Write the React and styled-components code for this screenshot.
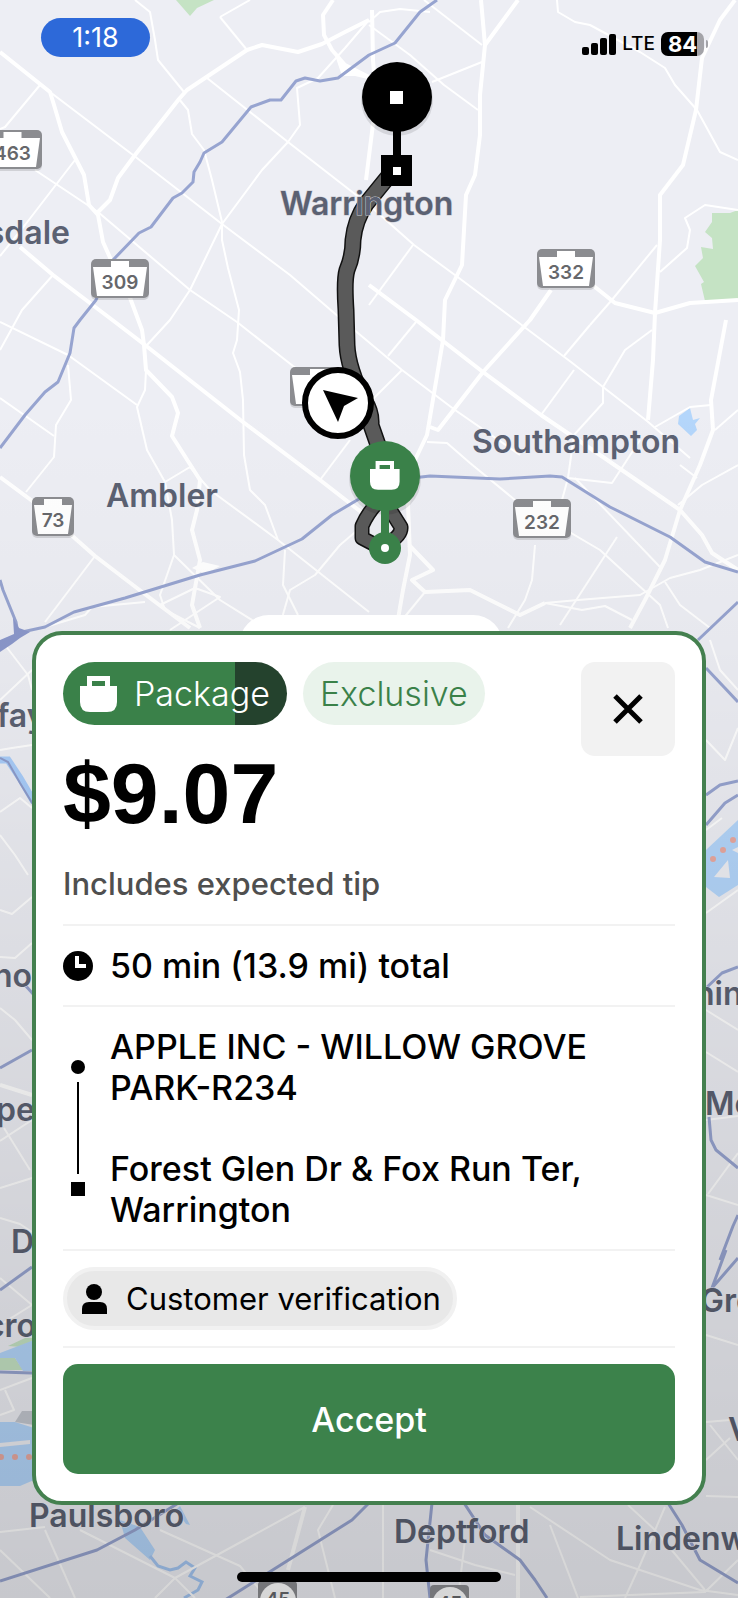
import styled, { createGlobalStyle } from "styled-components";

const GlobalStyle = createGlobalStyle`
  * {
    box-sizing: border-box;
  }

  body {
    margin: 0;
    font-family: Inter, "Liberation Sans", sans-serif;
    color: #000;
  }
`;

const Screen = styled.main`
  position: relative;
  min-height: 100vh;
  display: flex;
  flex-direction: column;
  justify-content: space-between;
  background: #edeef4;
  overflow: hidden;
`;

const MapLayer = styled.div`
  position: absolute;
  inset: 0;

  svg {
    display: block;
    width: 100%;
    height: 100%;
  }
`;

const StatusBar = styled.header`
  position: relative;
  display: flex;
  align-items: center;
  justify-content: space-between;
  padding: 18px 34px 0 41px;
`;

const Clock = styled.time`
  width: 109px;
  height: 39px;
  border-radius: 20px;
  background: #2d69d9;
  color: #fff;
  font-size: 27px;
  line-height: 39px;
  text-align: center;
`;

const StatusIcons = styled.div`
  display: flex;
  align-items: center;
  gap: 6px;
  padding-top: 13px;
  font-size: 19px;
  line-height: 24px;
  font-weight: 500;
`;

const Battery = styled.span`
  position: relative;
  width: 43px;
  height: 24px;
  border-radius: 7px;
  background: linear-gradient(90deg, #000 84%, #a3a3a8 84%);
  color: #fff;
  font-size: 22px;
  font-weight: 700;
  text-align: center;

  &::after {
    content: "";
    position: absolute;
    top: 8px;
    right: -4px;
    width: 2px;
    height: 8px;
    border-radius: 0 2px 2px 0;
    background: #a3a3a8;
  }
`;

const Bottom = styled.div`
  position: relative;
  padding: 0 32px 16px;
`;

const SheetTab = styled.div`
  position: absolute;
  top: -16px;
  left: 50%;
  width: 264px;
  height: 60px;
  margin-left: -130px;
  border-radius: 30px;
  background: #fff;
`;

const Card = styled.section`
  position: relative;
  padding: 27px;
  border: 4px solid #44804f;
  border-radius: 30px;
  background: #fff;
`;

const CardHeader = styled.div`
  display: flex;
  align-items: flex-start;
  justify-content: space-between;
`;

const Tags = styled.div`
  display: flex;
  gap: 16px;
`;

const Tag = styled.span`
  display: flex;
  align-items: center;
  gap: 17px;
  height: 63px;
  padding: 0 17px;
  border-radius: 32px;
  background: ${({ $background }) => $background};
  color: ${({ $color }) => $color};
  font-size: 34px;
  font-weight: 300;
`;

const Price = styled.h1`
  margin: 28px 0 31px;
  font-family: "Liberation Sans", sans-serif;
  font-size: 86px;
  line-height: 80px;
  font-weight: 700;
`;

const CloseButton = styled.button`
  display: grid;
  place-items: center;
  width: 94px;
  height: 94px;
  padding: 0;
  border: 0;
  border-radius: 14px;
  background: #f2f2f2;
`;

const Row = styled.div`
  display: flex;
  gap: 17px;
  padding: ${({ $padding }) => $padding || "19px 0"};
  border-bottom: 2px solid #f2f2f2;
  font-size: 34px;
  line-height: 41px;
  font-weight: 500;

  > svg {
    flex: none;
    align-self: center;
  }
`;

const TipRow = styled(Row)`
  padding: 0 0 20px;
  color: #4f4f4f;
  font-size: 31px;
  line-height: 40px;
`;

const Rail = styled.div`
  display: flex;
  flex-direction: column;
  align-items: center;
  width: 30px;
  padding: 34px 0;
`;

const StopMark = styled.span`
  width: 14px;
  height: 14px;
  border-radius: ${({ $round }) => ($round ? "50%" : 0)};
  background: #000;
`;

const RailLine = styled.span`
  flex: 1;
  width: 2px;
  margin: 8px 0;
  background: #000;
`;

const Stops = styled.ol`
  flex: 1;
  display: grid;
  gap: 40px;
  margin: 0;
  padding: 0;
  list-style: none;
`;

const Chip = styled.span`
  display: flex;
  align-items: center;
  gap: 19px;
  height: 63px;
  padding: 0 12px 0 15px;
  border: 4px solid #f1f1f1;
  border-radius: 32px;
  background: #e8e8e8;
  font-size: 31px;
  font-weight: 400;
`;

const AcceptButton = styled.button`
  display: block;
  width: 100%;
  height: 110px;
  margin-top: 16px;
  border: 0;
  border-radius: 15px;
  background: #3c824b;
  color: #fff;
  font-family: inherit;
  font-size: 34px;
  font-weight: 500;
`;

const HomeIndicator = styled.div`
  width: 264px;
  height: 10px;
  margin: 67px auto 0;
  border-radius: 5px;
  background: #000;
`;

const MapLabel = styled.text`
  fill: #5b6172;
  font-size: 32px;
  font-weight: 600;
`;

const ShieldLabel = styled.text`
  fill: #66676b;
  font-size: 19px;
  font-weight: 600;
  text-anchor: middle;
`;

const minorRoads = [
  "50,92 133,155 177,189 222,224 290,275 340,318 402,370 455,410 520,455",
  "135,0 150,12 155,40 158,60 184,92",
  "179,99 188,110 192,134 204,150 212,180 222,222 222,240 228,268 239,310 237,340 233,353 240,372 243,400 244,455 250,490 265,505 278,540",
  "220,17 250,0",
  "247,50 220,17",
  "207,78 288,142 369,205 414,245 459,278 515,320 571,362 603,387 647,421 690,458",
  "369,20 345,48 318,78 297,88 300,125 288,142 262,170 222,224 190,290 170,320 147,345",
  "40,85 5,127 0,129",
  "75,160 25,225 0,256",
  "35,170 98,212 190,290 237,322 293,366 320,385",
  "53,275 22,310 0,350",
  "0,322 68,355 137,405",
  "146,370 145,390 137,407 147,450 165,482 172,520 174,555 160,595 165,610 200,628",
  "68,365 71,400 56,425 54,457 26,492",
  "0,398 54,436",
  "95,556 45,622",
  "165,482 190,467 210,490 278,540 369,612",
  "285,550 283,585 298,615",
  "360,528 340,545 315,575 290,590 280,625",
  "174,555 220,600 260,625",
  "160,605 195,588 220,597 170,630",
  "45,627 85,615 92,607 145,602",
  "320,480 350,440",
  "657,245 611,301 590,325",
  "660,272 687,248 690,230 685,218 705,205 738,210",
  "557,0 558,12 575,22 590,25 640,52 665,68 675,85 697,110 720,152 738,160",
  "424,0 482,45",
  "369,22 380,12 400,9 430,12",
  "369,25 410,55 444,85 478,110",
  "482,62 432,82",
  "413,245 369,305",
  "402,370 369,403",
  "416,322 388,356",
  "574,370 541,415",
  "590,325 564,356",
  "652,330 625,350 603,387 603,403 574,435 568,478 562,500",
  "655,427 690,407 711,405",
  "738,410 715,430",
  "680,465 697,478",
  "678,505 702,485 738,465",
  "427,442 447,443 470,463 515,500 600,550 660,605 668,628",
  "568,478 612,483 640,440",
  "535,545 532,580 525,600 508,628",
  "738,555 700,570 670,578 640,595 578,600 545,603",
  "617,537 560,625",
  "575,478 660,567",
  "545,603 582,610 605,606 632,620",
  "665,582 680,605 710,628",
  "425,592 398,625",
  "5,645 28,675 32,690",
  "0,700 32,670",
  "0,750 12,748 32,745",
  "0,812 20,798 32,808",
  "0,835 15,855 28,875",
  "0,910 12,914 32,897",
  "0,957 15,958 32,943",
  "0,1008 15,1020 32,1040",
  "0,1141 32,1120",
  "4,1128 30,1170",
  "0,1188 32,1178",
  "0,1218 20,1224 32,1232",
  "0,1278 32,1305",
  "0,1325 32,1305",
  "0,1390 32,1378",
  "5,1390 14,1410 0,1415",
  "710,640 720,670 738,690",
  "706,740 725,760 738,728",
  "706,830 722,818",
  "706,913 738,890",
  "706,1010 738,1030",
  "706,1052 738,1072",
  "706,1120 738,1116",
  "706,1195 738,1205",
  "738,1153 708,1194",
  "706,1335 738,1345",
  "706,1422 730,1420",
  "710,1425 738,1460",
  "706,1460 730,1438",
  "706,1496 738,1497",
  "45,1530 75,1598",
  "0,1532 45,1527",
  "80,1530 175,1578 195,1598",
  "155,1598 175,1578 305,1507",
  "160,1530 240,1566 260,1590",
  "0,1550 50,1598",
  "333,1505 318,1530 335,1598",
  "383,1505 383,1598",
  "430,1550 475,1565 515,1575",
  "465,1540 458,1598",
  "530,1507 610,1560 700,1590 738,1595",
  "550,1525 578,1598",
  "665,1507 640,1565 625,1598",
  "628,1505 655,1530 705,1590",
  "580,1597 705,1592 738,1560",
];

const majorRoads = [
  "0,52 50,92 54,105 62,132 84,175 89,205 98,215 103,242 112,262 129,295 142,330 144,345 146,370 172,397 178,413 172,436 200,480 197,510 192,530 200,560 192,605 200,628",
  "369,20 345,32 322,44 298,52 262,45 247,50 187,90 179,99 135,155 118,178 110,200 98,212",
  "333,0 323,15 324,35 332,50 345,65 369,77",
  "20,247 53,275 115,322 145,345 243,422 320,480 365,515",
  "0,477 35,503 95,556 150,598 190,628",
  "372,10 373,60 376,100 366,180",
  "369,285 416,320 443,341 483,372 541,415 600,455 680,510 702,535 712,553 738,570",
  "481,0 485,45",
  "518,0 485,45 480,95 480,135 475,175 466,195 462,265 445,300 443,340 427,435 415,460 408,505 410,555 403,590 397,625",
  "735,0 720,20 702,58 696,110 683,165 660,195 660,240 655,313 653,360 648,420",
  "590,283 615,303 655,313 690,303 738,300",
  "551,290 530,320 483,372 438,430 430,427",
  "726,320 711,400 713,430 700,465 680,510 665,560 645,600 630,628",
  "545,603 520,615 500,605 470,590 425,592 412,580 433,570 409,545",
  "0,1085 32,1095",
  "305,1507 288,1570",
  "518,1505 518,1598",
];

const highways = [
  "437,0 420,12 395,43 369,55 338,78 320,81 305,78 296,81 281,100 270,100 251,107 222,142 204,153 200,162 194,172 193,182 182,193 173,198 151,227 139,233 113,260 96,300 80,320 74,328 70,353 58,382 45,392 25,415 0,448",
  "0,646 22,632 45,627 74,612 125,598 200,575 255,561 302,539 332,515 369,493 395,480 430,476 500,479 550,476 562,477 610,507 670,537 705,562 738,572",
  "0,580 3,590 16,622 18,634",
  "738,602 698,640",
  "706,668 738,702",
  "706,795 720,785 738,781",
  "706,825 725,803 738,795",
  "706,988 722,973 738,967",
  "709,1117 711,1140 716,1150 738,1168",
  "738,1215 733,1226 720,1260",
  "726,1250 712,1288 738,1258",
  "0,1068 32,1050",
  "25,985 34,995",
  "0,1290 32,1267",
  "0,1372 32,1373",
  "0,1581 97,1550 135,1530 180,1502",
  "225,1600 352,1520 372,1500",
  "432,1503 426,1560 430,1598",
  "464,1503 485,1535 520,1560 535,1580 547,1598",
  "668,1503 682,1525 700,1560 738,1583",
];

const labels = [
  { text: "Warrington", x: 280, y: 215 },
  { text: "Southampton", x: 472, y: 453 },
  { text: "Ambler", x: 106, y: 507 },
  { text: "sdale", x: 70, y: 244, end: true },
  { text: "fay", x: -3, y: 727 },
  { text: "no", x: 32, y: 987, end: true },
  { text: "pe", x: 35, y: 1121, end: true },
  { text: "D", x: 11, y: 1253 },
  { text: "cro", x: 36, y: 1337, end: true },
  { text: "nin", x: 695, y: 1005 },
  { text: "Mc", x: 705, y: 1115 },
  { text: "Gro", x: 700, y: 1312 },
  { text: "V", x: 728, y: 1441 },
  { text: "Paulsboro", x: 29, y: 1527 },
  { text: "Deptford", x: 394, y: 1543 },
  { text: "Lindenw", x: 616, y: 1550 },
];

const shields = [
  { text: "463", x: -17, y: 130, width: 59 },
  { text: "309", x: 91, y: 259, width: 58 },
  { text: "332", x: 537, y: 249, width: 58 },
  { text: "", x: 290, y: 367, width: 58 },
  { text: "73", x: 32, y: 497, width: 42 },
  { text: "232", x: 513, y: 499, width: 58 },
];

const Shield = ({ text, x, y, width }) => (
  <g transform={`translate(${x} ${y})`}>
    <rect y="3" width={width} height="38" rx="5" fill="#000" opacity="0.12" />
    <rect width={width} height="39" rx="5" fill="#8b8c90" />
    <path
      d={`M2 8 H${width / 2 - 9} V2 H${width / 2 + 9} V8 H${width - 2} L${width - 6} 37 H6 Z`}
      fill="#fff"
    />
    <ShieldLabel x={width / 2} y="30">
      {text}
    </ShieldLabel>
  </g>
);

const RoundShield = ({ text, x, y }) => (
  <g transform={`translate(${x} ${y})`}>
    <rect width="39" height="39" rx="4" fill="#8b8c90" />
    <circle cx="20" cy="20" r="18" fill="#fff" />
    <ShieldLabel x="20" y="25">
      {text}
    </ShieldLabel>
  </g>
);

const bagPath =
  "M7 0 H30 V10 H37 V26 Q37 36 27 36 H10 Q0 36 0 26 V10 H7 Z M12 5 V10 H25 V5 Z";

const BagIcon = () => (
  <svg width="37" height="36" viewBox="0 0 37 36" aria-hidden="true">
    <path d={bagPath} fill="#fff" fillRule="evenodd" />
  </svg>
);

const routePath =
  "M392 172 L366 204 Q355 220 353 240 Q353 256 347 270 Q344 280 346 310 L347 345 Q348 368 364 400 Q372 412 371 425 L378 445";
const pickupLoop =
  "M380 500 Q368 512 362 526 L362 538 L385 550 M384 500 L401 527 Q402 536 385 545";

const Map = () => (
  <MapLayer>
    <svg viewBox="0 0 738 1598" preserveAspectRatio="xMidYMin slice">
      <defs>
        <linearGradient id="shade" x1="0" y1="0" x2="0" y2="1">
          <stop offset="0.25" stopColor="#000" stopOpacity="0" />
          <stop offset="0.4" stopColor="#000" stopOpacity="0.025" />
          <stop offset="0.65" stopColor="#000" stopOpacity="0.085" />
          <stop offset="1" stopColor="#000" stopOpacity="0.16" />
        </linearGradient>
      </defs>

      <g fill="#c5e3c4">
        <path d="M176 0 L190 16 L197 8 L214 0 Z" />
        <path d="M712 213 H730 L738 210 V301 H705 L701 284 L704 282 L695 266 L703 258 L701 247 L713 249 L712 238 L705 232 L712 222 Z" />
        <path d="M8 1346 L25 1338 H34 V1348 Z M0 1358 H15 L23 1370 H0 Z" />
      </g>
      <g fill="#b4d6fb">
        <path d="M679 416 L690 408 L693 420 L700 418 L695 424 L697 430 L691 436 L678 424 Z" />
        <path d="M706 850 L738 820 V885 L719 897 L706 887 Z" />
        <path d="M0 1353 L34 1340 V1371 H23 L15 1358 H0 Z M0 1422 H15 L34 1428 V1480 L20 1486 L0 1486 Z" />
        <path d="M120 1520 L140 1527 L155 1550 L150 1560 L125 1538 Z M180 1506 L190 1525 L186 1524 L176 1510 Z" />
      </g>
      <path d="M714 877 L728 860 L730 878 Z M732 850 L738 847 V853 Z M0 1443 L30 1440 V1444 L0 1447 Z" fill="#eeeff4" />
      <path d="M15 1422 L22 1411 H34 V1425 Z" fill="#c4c8d0" />
      <path d="M0 760 L8 760 L20 778 L34 802" fill="none" stroke="#a9cdfa" strokeWidth="7" />
      <path d="M0 758 L8 762 L20 783 L34 806" fill="none" stroke="#8e9ccb" strokeWidth="2" />
      <path
        d="M150 1556 L158 1566 L170 1570 L178 1568 L186 1562 L195 1568 L190 1576 L202 1582 L198 1590 L184 1598"
        fill="none"
        stroke="#a4c6f2"
        strokeWidth="3"
      />
      <g fill="#e9a9a0">
        {[1, 15, 29].map((x) => (
          <circle key={x} cx={x} cy="1457" r="3" />
        ))}
        <circle cx="713" cy="859" r="3" />
        <circle cx="723" cy="850" r="3" />
        <circle cx="733" cy="840" r="3" />
      </g>

      <g fill="none" stroke="#fff" strokeLinejoin="round">
        {minorRoads.map((points) => (
          <polyline key={points} points={points} strokeWidth="2" />
        ))}
        {majorRoads.map((points) => (
          <polyline key={points} points={points} strokeWidth="4" />
        ))}
      </g>
      <path d="M334 52 L340 62 L362 72 L372 80 L355 76 L342 76 Z M192 568 L203 562 L220 566 L205 574 Z" fill="#fff" />
      <g fill="none" stroke="#97a4d0" strokeWidth="3" strokeLinejoin="round">
        {highways.map((points) => (
          <polyline key={points} points={points} />
        ))}
      </g>
      <path d="M13 618 L19 628 L30 632 L20 638 L12 644 L0 652 V640 L14 634 Z" fill="#8b98cb" />

      {shields.map((shield) => (
        <Shield key={shield.x} {...shield} />
      ))}
      <RoundShield text="45" x={258} y={1581} />
      <RoundShield text="45" x={430} y={1585} />

      <g fill="none" strokeLinejoin="round">
        <path d={routePath} stroke="#111" strokeWidth="17" />
        <path d={pickupLoop} stroke="#111" strokeWidth="15" />
        <path d={routePath} stroke="#5a5a5a" strokeWidth="14" />
        <path d={pickupLoop} stroke="#5a5a5a" strokeWidth="12" />
      </g>

      {labels.map(({ text, x, y, end }) => (
        <MapLabel
          key={text}
          x={x}
          y={y}
          textAnchor={end ? "end" : "start"}
          stroke={text === "Warrington" ? "#c9cad0" : "#edeef4"}
          strokeWidth="1"
          paintOrder="stroke"
        >
          {text}
        </MapLabel>
      ))}

      <rect width="738" height="1598" fill="url(#shade)" />

      {/* drop-off pin */}
      <circle cx="397" cy="100" r="36" opacity="0.1" />
      <circle cx="397" cy="97" r="35" />
      <path d="M393 130 H401 V155 H412 V186 H381 V155 H393 Z" />
      <path d="M390 91 H403 V104 H390 Z M393 167 H401 V175 H393 Z" fill="#fff" />

      {/* pickup pin */}
      <circle cx="385" cy="479" r="36" opacity="0.1" />
      <g fill="#3a8149">
        <circle cx="385" cy="476" r="35" />
        <path d="M381 508 H389 V536 H381 Z" />
        <circle cx="385" cy="548" r="16" />
      </g>
      <circle cx="385" cy="548" r="4" fill="#fff" />
      <g transform="translate(370 461) scale(0.8)">
        <path d={bagPath} fill="#fff" fillRule="evenodd" />
      </g>

      {/* driver position */}
      <circle cx="338" cy="403" r="33" fill="#fff" stroke="#000" strokeWidth="6" />
      <path d="M323 390 L358 398 L344 406 L338 422 Z" />
    </svg>
  </MapLayer>
);

const SignalIcon = () => (
  <svg width="34" height="21" viewBox="0 0 34 21" aria-hidden="true">
    <rect y="13" width="7" height="8" rx="2" />
    <rect x="9" y="9" width="7" height="12" rx="2" />
    <rect x="18" y="4" width="7" height="17" rx="2" />
    <rect x="27" width="7" height="21" rx="2" />
  </svg>
);

const CloseIcon = () => (
  <svg width="30" height="30" viewBox="0 0 30 30" aria-hidden="true">
    <path d="M2 2 L28 28 M28 2 L2 28" stroke="#000" strokeWidth="5" />
  </svg>
);

const ClockIcon = () => (
  <svg width="30" height="30" viewBox="0 0 30 30" aria-hidden="true">
    <circle cx="15" cy="15" r="15" />
    <path d="M14 5 V15 H23" fill="none" stroke="#fff" strokeWidth="4" />
  </svg>
);

const PersonIcon = () => (
  <svg width="25" height="30" viewBox="0 0 25 30" aria-hidden="true">
    <circle cx="12" cy="8" r="8" />
    <path d="M0 30 V25 Q0 18 7 18 H18 Q25 18 25 25 V30 Z" />
  </svg>
);

export default function App() {
  return (
    <>
      <GlobalStyle />
      <Screen>
        <Map />

        <StatusBar>
          <Clock>1:18</Clock>
          <StatusIcons>
            <SignalIcon />
            <span>LTE</span>
            <Battery>84</Battery>
          </StatusIcons>
        </StatusBar>

        <Bottom>
          <SheetTab />
          <Card>
            <CardHeader>
              <div>
                <Tags>
                  <Tag
                    $background="linear-gradient(90deg, #3a8149 77%, #24422d 77%)"
                    $color="#fff"
                  >
                    <BagIcon />
                    Package
                  </Tag>
                  <Tag $background="#e9f3eb" $color="#3a8149">
                    Exclusive
                  </Tag>
                </Tags>
                <Price>$9.07</Price>
              </div>
              <CloseButton aria-label="Close">
                <CloseIcon />
              </CloseButton>
            </CardHeader>

            <TipRow>Includes expected tip</TipRow>

            <Row>
              <ClockIcon />
              50 min (13.9 mi) total
            </Row>

            <Row>
              <Rail>
                <StopMark $round />
                <RailLine />
                <StopMark />
              </Rail>
              <Stops>
                <li>
                  APPLE INC - WILLOW GROVE
                  <br />
                  PARK-R234
                </li>
                <li>
                  Forest Glen Dr &amp; Fox Run Ter,
                  <br />
                  Warrington
                </li>
              </Stops>
            </Row>

            <Row $padding="16px 0">
              <Chip>
                <PersonIcon />
                Customer verification
              </Chip>
            </Row>

            <AcceptButton>Accept</AcceptButton>
          </Card>
          <HomeIndicator />
        </Bottom>
      </Screen>
    </>
  );
}
